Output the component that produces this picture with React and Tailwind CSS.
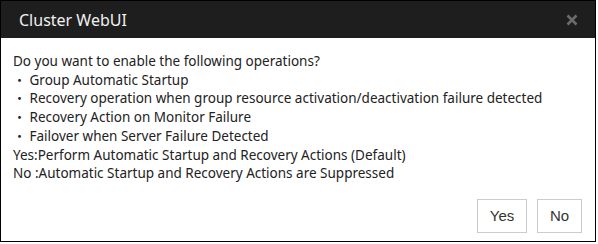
import React from "react";

const items = [
  "Group Automatic Startup",
  "Recovery operation when group resource activation/deactivation failure detected",
  "Recovery Action on Monitor Failure",
  "Failover when Server Failure Detected",
];

const DialogButton = ({ children, className = "" }) => (
  <button
    className={`h-[34px] border border-[#cccccc] bg-white text-[15px] text-[#333] font-['Liberation_Sans',Arial,sans-serif] ${className}`}
  >
    {children}
  </button>
);

const App = () => {
  return (
    <div className="w-[598px] h-[244px] bg-white">
      <div className="w-[596px] h-[242px] border border-black flex flex-col bg-white">
        <div className="h-[37px] bg-[#1e1e1e] flex items-center justify-between pl-[18px] pr-[17px]">
          <span className="text-[16px] text-[#f0f0f0] font-['Noto_Sans','Noto_Sans_CJK_JP',sans-serif]">
            Cluster WebUI
          </span>
          <svg width="12" height="12" viewBox="0 0 12 12">
            <path d="M1.5 1.5 L10.5 10.5 M10.5 1.5 L1.5 10.5" stroke="#6b6b6b" strokeWidth="2.6" />
          </svg>
        </div>
        <div className="flex-1 flex flex-col px-[12px] pt-[14px] text-[13.5px] leading-[18.7px] text-[#222] font-['Noto_Sans','Noto_Sans_CJK_JP',sans-serif]">
          <p>Do you want to enable the following operations?</p>
          {items.map((t) => (
            <p key={t}>
              <span className="font-['Noto_Sans_CJK_JP',sans-serif] text-[13px]">・</span> {t}
            </p>
          ))}
          <p>Yes:Perform Automatic Startup and Recovery Actions (Default)</p>
          <p>No :Automatic Startup and Recovery Actions are Suppressed</p>
          <div className="flex justify-end gap-[10px] mt-auto mb-[8px] pr-[1px]">
            <DialogButton className="w-[50px]">Yes</DialogButton>
            <DialogButton className="w-[45px]">No</DialogButton>
          </div>
        </div>
      </div>
    </div>
  );
};

export default App;
